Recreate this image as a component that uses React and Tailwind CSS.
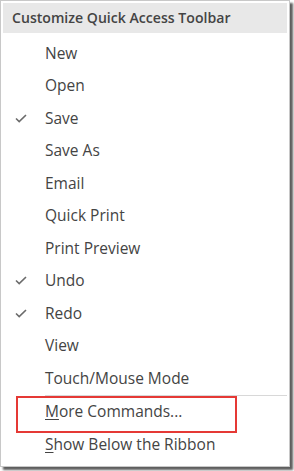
import React from "react";

const items = [
  { label: "New" },
  { label: "Open" },
  { label: "Save", checked: true },
  { label: "Save As" },
  { label: "Email" },
  { label: "Quick Print" },
  { label: "Print Preview" },
  { label: "Undo", checked: true },
  { label: "Redo", checked: true },
  { label: "View" },
  { label: "Touch/Mouse Mode" },
];

function Check() {
  return (
    <svg width="12" height="9" viewBox="0 0 12 9" className="block">
      <path d="M1 4.5 L4.2 7.6 L11 1" fill="none" stroke="#6b6b6b" strokeWidth="1.6" />
    </svg>
  );
}

function Row({ label, checked, children }) {
  return (
    <div className="flex h-[32.5px] items-center">
      <div className="flex w-[42px] pl-[12px]">{checked ? <Check /> : null}</div>
      <div className="text-[15.5px] leading-none text-[#444444]">{children || label}</div>
    </div>
  );
}

export default function App() {
  return (
    <div
      className="relative h-[471px] w-[294px] bg-white"
      style={{ fontFamily: '"Open Sans", "Noto Sans", sans-serif' }}
    >
      <div className="flex h-[467px] w-[290px] flex-col border border-[#c8c8c8] bg-white p-[2px] shadow-[3px_3px_2px_rgba(40,40,40,0.75)]">
        <div className="flex h-[30px] items-center bg-[#e8e8e8] pl-[9px] text-[14.1px] font-semibold text-[#444444]">
          Customize Quick Access Toolbar
        </div>
        <div className="pt-[4px]">
          {items.map((it) => (
            <Row key={it.label} {...it} />
          ))}
        </div>
        <div className="ml-[42px] h-px bg-[#d8d8d8]" />
        <div className="relative">
          <div className="pointer-events-none absolute left-[13px] top-[0px] h-[37px] w-[221px] border-2 border-[#e53935]" />
          <Row>
            <span>
              <span className="underline underline-offset-2">M</span>ore Commands...
            </span>
          </Row>
          <Row>
            <span>
              <span className="underline underline-offset-2">S</span>how Below the Ribbon
            </span>
          </Row>
        </div>
      </div>
    </div>
  );
}
